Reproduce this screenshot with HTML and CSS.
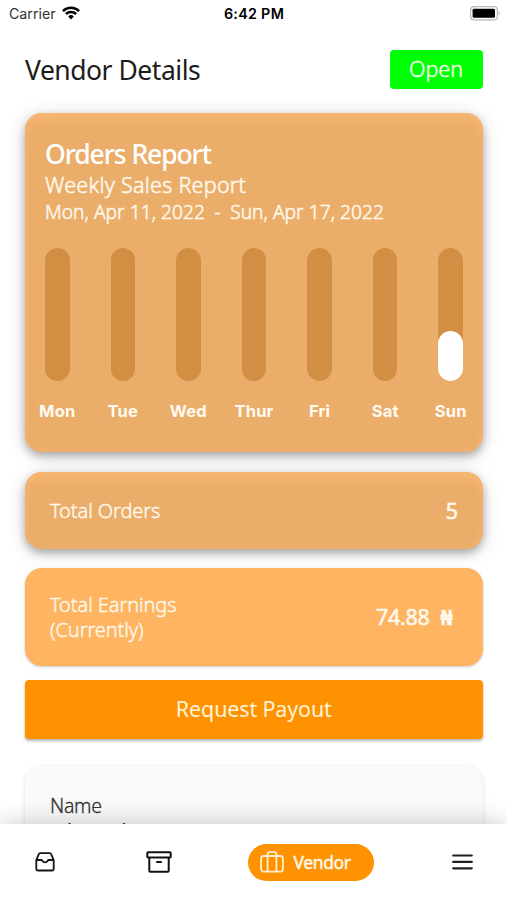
FILE: index.html
```html
<!DOCTYPE html>
<html lang="en">
<head>
<meta charset="utf-8">
<title>Vendor Details</title>
<link rel="stylesheet" href="styles.css">
</head>
<body>
<div class="screen">
  <header class="status">
    <div class="carrier">
      <span>Carrier</span>
      <svg width="18" height="14" viewBox="0 0 18 14" fill="none" stroke="#000" stroke-width="2.5">
        <path d="M.9 5.1A11.6 11.6 0 0 1 17.100 5.100M3.900 8A7.300 7.300 0 0 1 14.100 8"/>
        <path d="M6.200 10.400A4 4 0 0 1 11.800 10.400L9 13.400Z" fill="#000" stroke="none"/>
      </svg>
    </div>
    <span class="time">6:42 PM</span>
    <svg class="battery" width="31" height="15" viewBox="0 0 31 15">
      <rect x=".6" y=".7" width="26.800" height="13.200" rx="3.500" fill="#fff" stroke="#b9b9b9" stroke-width="1.200"/>
      <rect x="2.600" y="2.800" width="22.400" height="9" rx="1.500"/>
      <path d="M28.600 5.200q2.200 2 0 4.400z" fill="#b0b0b0"/>
    </svg>
  </header>

  <main class="content">
    <div class="title-row">
      <h1>Vendor Details</h1>
      <button class="open">Open</button>
    </div>

    <section class="card raised report">
      <h2>Orders Report</h2>
      <p class="subtitle">Weekly Sales Report</p>
      <p class="range"><span>Mon, Apr 11, 2022</span><span>-</span><span>Sun, Apr 17, 2022</span></p>
      <div class="chart">
        <div class="day"><div class="track"></div><span>Mon</span></div>
        <div class="day"><div class="track"></div><span>Tue</span></div>
        <div class="day"><div class="track"></div><span>Wed</span></div>
        <div class="day"><div class="track"></div><span>Thur</span></div>
        <div class="day"><div class="track"></div><span>Fri</span></div>
        <div class="day"><div class="track"></div><span>Sat</span></div>
        <div class="day"><div class="track"><div class="fill"></div></div><span>Sun</span></div>
      </div>
    </section>

    <section class="card raised orders">
      <span class="label">Total Orders</span>
      <span class="value">5</span>
    </section>

    <section class="card earnings">
      <span class="label">Total Earnings<br>(Currently)</span>
      <span class="value money"><span>74.88</span><span class="naira">₦</span></span>
    </section>

    <button class="payout">Request Payout</button>

    <section class="details">
      <span class="name-label">Name</span>
      <span class="name">John Dele</span>
    </section>
  </main>

  <nav class="tabs">
    <svg class="inbox" width="20" height="20" viewBox="0 0 20 20" fill="none" stroke="#151515" stroke-width="1.800" stroke-linejoin="round" stroke-linecap="round">
      <path d="M1.300 8.200 3.700 2.300Q4.100 1.200 5.300 1.200H14.700Q15.900 1.200 16.300 2.300L18.700 8.200V16.700Q18.700 18.500 16.900 18.500H3.100Q1.300 18.500 1.300 16.700ZM1.500 8H6.500C7.400 8 7.300 10.400 10 10.400S12.600 8 13.500 8H18.500"/>
    </svg>
    <svg class="archive" width="26" height="22" viewBox="0 0 26 22" fill="none" stroke="#111" stroke-width="2" stroke-linejoin="round" stroke-linecap="round">
      <path d="M2 1.300H24Q24.700 1.300 24.700 2V5.800Q24.700 6.500 24 6.500H2Q1.300 6.500 1.300 5.800V2Q1.300 1.300 2 1.300ZM3.300 6.800V19.800Q3.300 20.700 4.200 20.700H21.800Q22.700 20.700 22.700 19.800V6.800M11 11H15"/>
    </svg>
    <div class="active">
      <svg width="24" height="22" viewBox="0 0 24 22" fill="none" stroke="#fff0cf" stroke-width="1.800" stroke-linejoin="round">
        <rect x="1.100" y="5" width="21.800" height="15.700" rx="2.700"/>
        <path d="M7.600 20.700V3.300Q7.600 1.200 9.700 1.200H14.300Q16.400 1.200 16.400 3.300V20.700"/>
      </svg>
      <span>Vendor</span>
    </div>
    <svg class="menu" width="21" height="16" viewBox="0 0 21 16" stroke="#202020" stroke-width="2.200" stroke-linecap="round">
      <path d="M1.200 1.500H19.800M1.200 7.900H19.800M1.200 14.300H19.800"/>
    </svg>
  </nav>
</div>
</body>
</html>
```
FILE: styles.css
```css
* { box-sizing: border-box; }
body {
  margin: 0;
  background: #fff;
  font-family: "Noto Sans", "Liberation Sans", sans-serif;
}
h1, h2, p { margin: 0; }
button { border: 0; padding: 0; font-family: inherit; }

.screen {
  width: 507px;
  height: 900px;
  display: flex;
  flex-direction: column;
  overflow: hidden;
}

.status {
  flex: none;
  height: 28px;
  padding: 0 6px 0 9px;
  display: grid;
  grid-template-columns: 1fr auto 1fr;
  align-items: center;
  font-family: Inter, "Liberation Sans", sans-serif;
  font-size: 14.200px;
  color: #111;
}
.carrier { display: flex; align-items: center; gap: 6px; margin-top: -1px; color: #333; }
.carrier svg { margin-top: -2px; }
.time { margin: -1px 2px 0 0; font-weight: 600; font-size: 14.300px; letter-spacing: .3px; color: #000; }
.battery { justify-self: end; margin-top: -1px; }

.content {
  flex: 1;
  min-height: 0;
  padding: 22px 24.500px 0 25px;
  overflow: hidden;
}

.title-row {
  height: 63px;
  display: flex;
  justify-content: space-between;
  align-items: flex-start;
}
h1 {
  font-weight: 400;
  font-size: 26.500px;
  line-height: 40px;
  letter-spacing: -.48px;
  color: #1c1c1c;
}
.open {
  width: 93px;
  height: 39px;
  border-radius: 4px;
  background: #00ff04;
  color: #f0ffea;
  font-weight: 300;
  font-size: 21.500px;
  line-height: 35px;
  padding-bottom: 2px;
  letter-spacing: 0;
  -webkit-text-stroke: .4px currentColor;
}

.card { border-radius: 17px; color: #fff8ec; }
.raised {
  background: #ebae6a;
  box-shadow:
    inset 0 8px 12px -3px #fab873,
    inset 0 0 9px rgba(250, 184, 115, .5),
    0 4px 8px rgba(0, 0, 0, .28),
    0 3px 20px rgba(0, 0, 0, .14);
}

.report { height: 339px; padding: 23px 19.500px 0 20px; }
h2 {
  font-weight: 500;
  font-size: 26.500px;
  line-height: 37px;
  letter-spacing: -1.100px;
  color: #fff;
}
.subtitle {
  font-weight: 300;
  font-size: 21.500px;
  line-height: 24px;
  padding-bottom: 2px;
  letter-spacing: .28px;
  -webkit-text-stroke: .5px currentColor;
}
.range {
  display: flex;
  gap: 9.500px;
  font-weight: 300;
  font-size: 19.200px;
  line-height: 26px;
  letter-spacing: .02px;
  -webkit-text-stroke: .5px currentColor;
}
.chart {
  margin-top: 22.500px;
  display: flex;
  justify-content: space-between;
}
.day {
  width: 24.500px;
  display: flex;
  flex-direction: column;
  align-items: center;
  font-family: Inter, "Liberation Sans", sans-serif;
  font-weight: 700;
  font-size: 16.500px;
  line-height: 20px;
  letter-spacing: .2px;
  color: #fffaf2;
}
.track {
  width: 100%;
  height: 133.500px;
  margin-bottom: 20px;
  display: flex;
  align-items: flex-end;
  border-radius: 13px;
  background: #d28e43;
}
.fill { width: 100%; height: 50px; border-radius: 13px; background: #fff; }

.orders, .earnings {
  display: flex;
  justify-content: space-between;
  align-items: center;
  padding: 0 25px;
}
.orders { height: 77px; margin-top: 19.500px; }
.earnings {
  height: 97.500px;
  margin-top: 19.500px;
  padding-right: 30px;
  background: #feb460;
  box-shadow: 0 1px 3px rgba(0, 0, 0, .22);
}
.label {
  font-weight: 300;
  font-size: 20px;
  line-height: 25px;
  letter-spacing: -.1px;
  -webkit-text-stroke: .4px currentColor;
}
.value { font-size: 21.500px; letter-spacing: -.500px; -webkit-text-stroke: .6px currentColor; }
.money { display: flex; gap: 11px; letter-spacing: -.300px; }
.naira { font-weight: 700; line-height: 29px; }

.payout {
  display: block;
  width: 100%;
  height: 59px;
  margin-top: 14.500px;
  padding-bottom: 2px;
  border-radius: 4px;
  background: #ff9200;
  box-shadow: 0 2px 3px rgba(0, 0, 0, .3);
  color: #fff3d8;
  font-size: 21.500px;
  line-height: 55px;
  letter-spacing: -.15px;
}

.details {
  height: 200px;
  margin-top: 27px;
  padding: 27px 25px 0;
  display: flex;
  flex-direction: column;
  border-radius: 17px;
  background: #fafafa;
  box-shadow: 0 1px 4px rgba(0, 0, 0, .14);
  font-size: 19.500px;
  line-height: 25px;
}
.name-label {
  font-weight: 300;
  color: #333;
  letter-spacing: -.3px;
  -webkit-text-stroke: .3px currentColor;
}
.name { color: #111; }

.tabs {
  flex: none;
  position: relative;
  height: 76px;
  padding: 0 34px 0 35px;
  display: flex;
  align-items: center;
  background: #fff;
  box-shadow: 0 0 26px rgba(0, 0, 0, .22);
}
.archive { margin: 0 76px 0 91px; }
.menu { margin-left: auto; }
.active {
  width: 126px;
  height: 37px;
  padding-left: 12px;
  display: flex;
  align-items: center;
  gap: 9.500px;
  border-radius: 19px;
  background: #ff9200;
  color: #fff6e5;
  font-size: 17.500px;
  letter-spacing: -.4px;
  -webkit-text-stroke: .5px currentColor;
}
```
